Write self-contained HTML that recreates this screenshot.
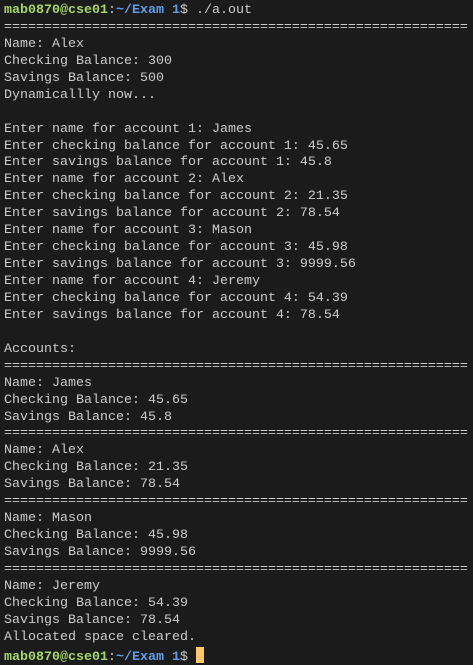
<!DOCTYPE html>
<html><head><meta charset="utf-8"><style>
html,body{margin:0;padding:0;background:#1b1b1b;width:473px;height:665px;overflow:hidden}
pre{margin:0;padding:3px 0 0 4px;font-family:"Liberation Mono",monospace;font-size:13.33px;line-height:16.93px;color:#cccccc;white-space:pre}
.g{color:#a7d66a;font-weight:bold}.b{color:#5f9ee8;font-weight:bold}
.c{display:inline-block;width:8px;height:16px;background:#ffc66b;vertical-align:-3px}
</style></head><body><pre><span class="g">mab0870@cse01</span>:<span class="b">~/Exam 1</span>$ ./a.out
==========================================================
Name: Alex
Checking Balance: 300
Savings Balance: 500
Dynamicallly now...

Enter name for account 1: James
Enter checking balance for account 1: 45.65
Enter savings balance for account 1: 45.8
Enter name for account 2: Alex
Enter checking balance for account 2: 21.35
Enter savings balance for account 2: 78.54
Enter name for account 3: Mason
Enter checking balance for account 3: 45.98
Enter savings balance for account 3: 9999.56
Enter name for account 4: Jeremy
Enter checking balance for account 4: 54.39
Enter savings balance for account 4: 78.54

Accounts:
==========================================================
Name: James
Checking Balance: 45.65
Savings Balance: 45.8
==========================================================
Name: Alex
Checking Balance: 21.35
Savings Balance: 78.54
==========================================================
Name: Mason
Checking Balance: 45.98
Savings Balance: 9999.56
==========================================================
Name: Jeremy
Checking Balance: 54.39
Savings Balance: 78.54
Allocated space cleared.
<span class="g">mab0870@cse01</span>:<span class="b">~/Exam 1</span>$ <span class="c"></span></pre></body></html>
